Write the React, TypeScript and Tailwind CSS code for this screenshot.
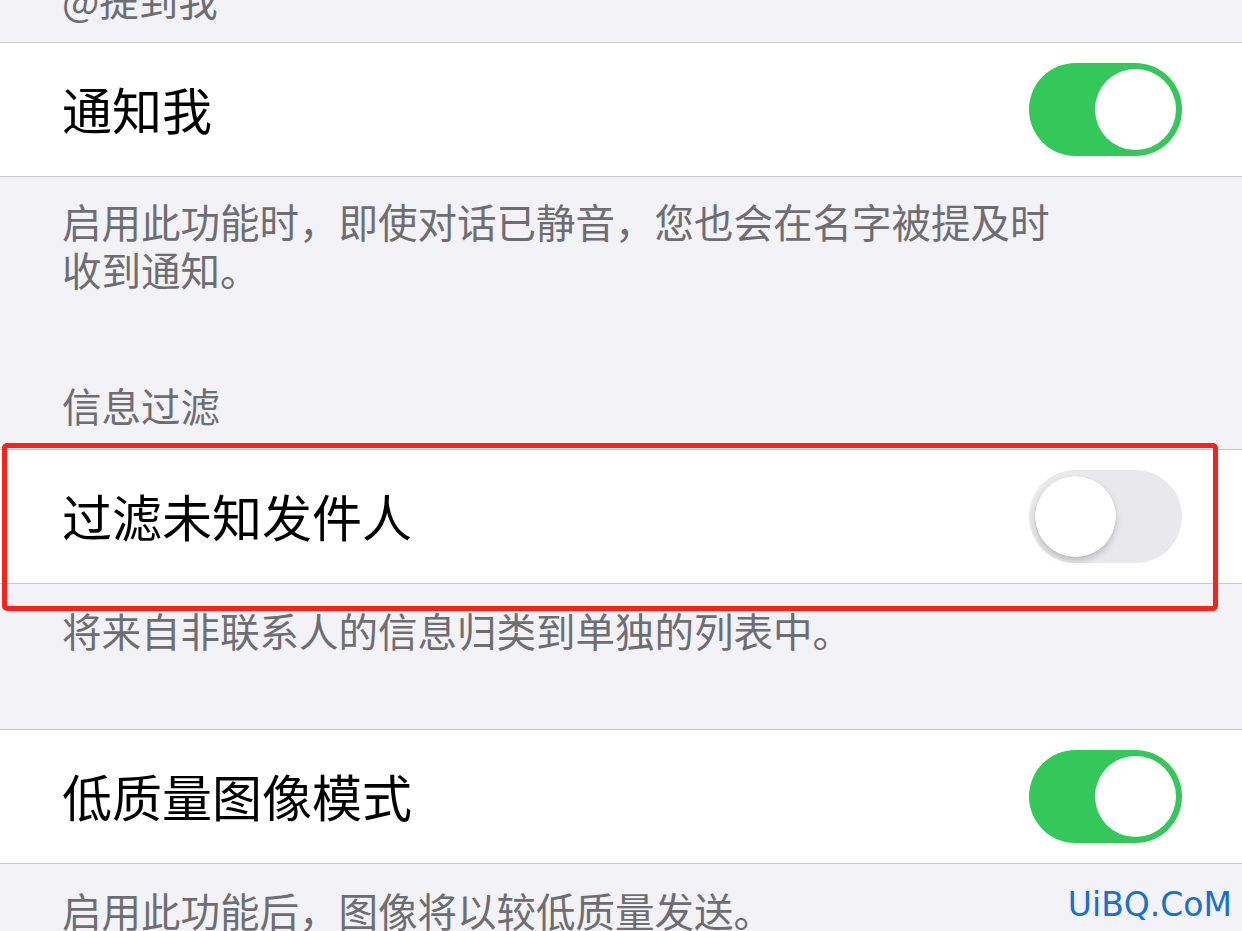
import React from 'react';

const font = { fontFamily: '"Noto Sans CJK SC", "Noto Sans", sans-serif' };

const Toggle: React.FC<{ on: boolean }> = ({ on }) => (
  <div
    className={`relative flex h-[93px] w-[153px] shrink-0 items-center rounded-full px-[6px] ${
      on ? 'justify-end bg-[#34c759]' : 'justify-start bg-[#e9e9eb]'
    }`}
  >
    <div
      className={`h-[81px] w-[81px] rounded-full bg-white ${
        on ? '' : 'shadow-[0_4px_6px_rgba(0,0,0,0.18),0_0_1px_rgba(0,0,0,0.2)]'
      }`}
    />
  </div>
);

const Row: React.FC<{ label: string; on: boolean }> = ({ label, on }) => (
  <div className="flex h-[135px] items-center justify-between border-y border-[#c8c7cc] bg-white pl-[62px] pr-[60px]">
    <span className="-mt-[4px] text-[50px] leading-none text-black">{label}</span>
    <Toggle on={on} />
  </div>
);

const Note: React.FC<{ children: React.ReactNode; className?: string }> = ({ children, className }) => (
  <p className={`px-[62px] text-[39.5px] leading-[48px] text-[#6d6d72] ${className ?? ''}`}>{children}</p>
);

export default function App() {
  return (
    <div className="relative h-[931px] w-[1242px] overflow-hidden bg-[#f2f2f7]" style={font}>
      <div className="h-[42px] overflow-hidden">
        <Note className="-mt-[25px]">@提到我</Note>
      </div>
      <Row label="通知我" on={true} />
      <Note className="pt-[20px]">
        启用此功能时，即使对话已静音，您也会在名字被提及时
        <br />
        收到通知。
      </Note>
      <Note className="pt-[88px] pb-[20px]">信息过滤</Note>
      <Row label="过滤未知发件人" on={false} />
      <Note className="pt-[22px] pb-[75px]">将来自非联系人的信息归类到单独的列表中。</Note>
      <Row label="低质量图像模式" on={true} />
      <Note className="pt-[22px]">启用此功能后，图像将以较低质量发送。</Note>

      <div className="pointer-events-none absolute left-[2px] top-[443px] h-[168px] w-[1216px] rounded-[5px] border-[5px] border-[#f5231c]" />
      <div
        className="absolute right-[10px] top-[888px] text-[33px] leading-none text-[#1b6fd1]"
        style={{ fontFamily: '"DejaVu Sans", Verdana, sans-serif' }}
      >
        UiBQ.CoM
      </div>
    </div>
  );
}
